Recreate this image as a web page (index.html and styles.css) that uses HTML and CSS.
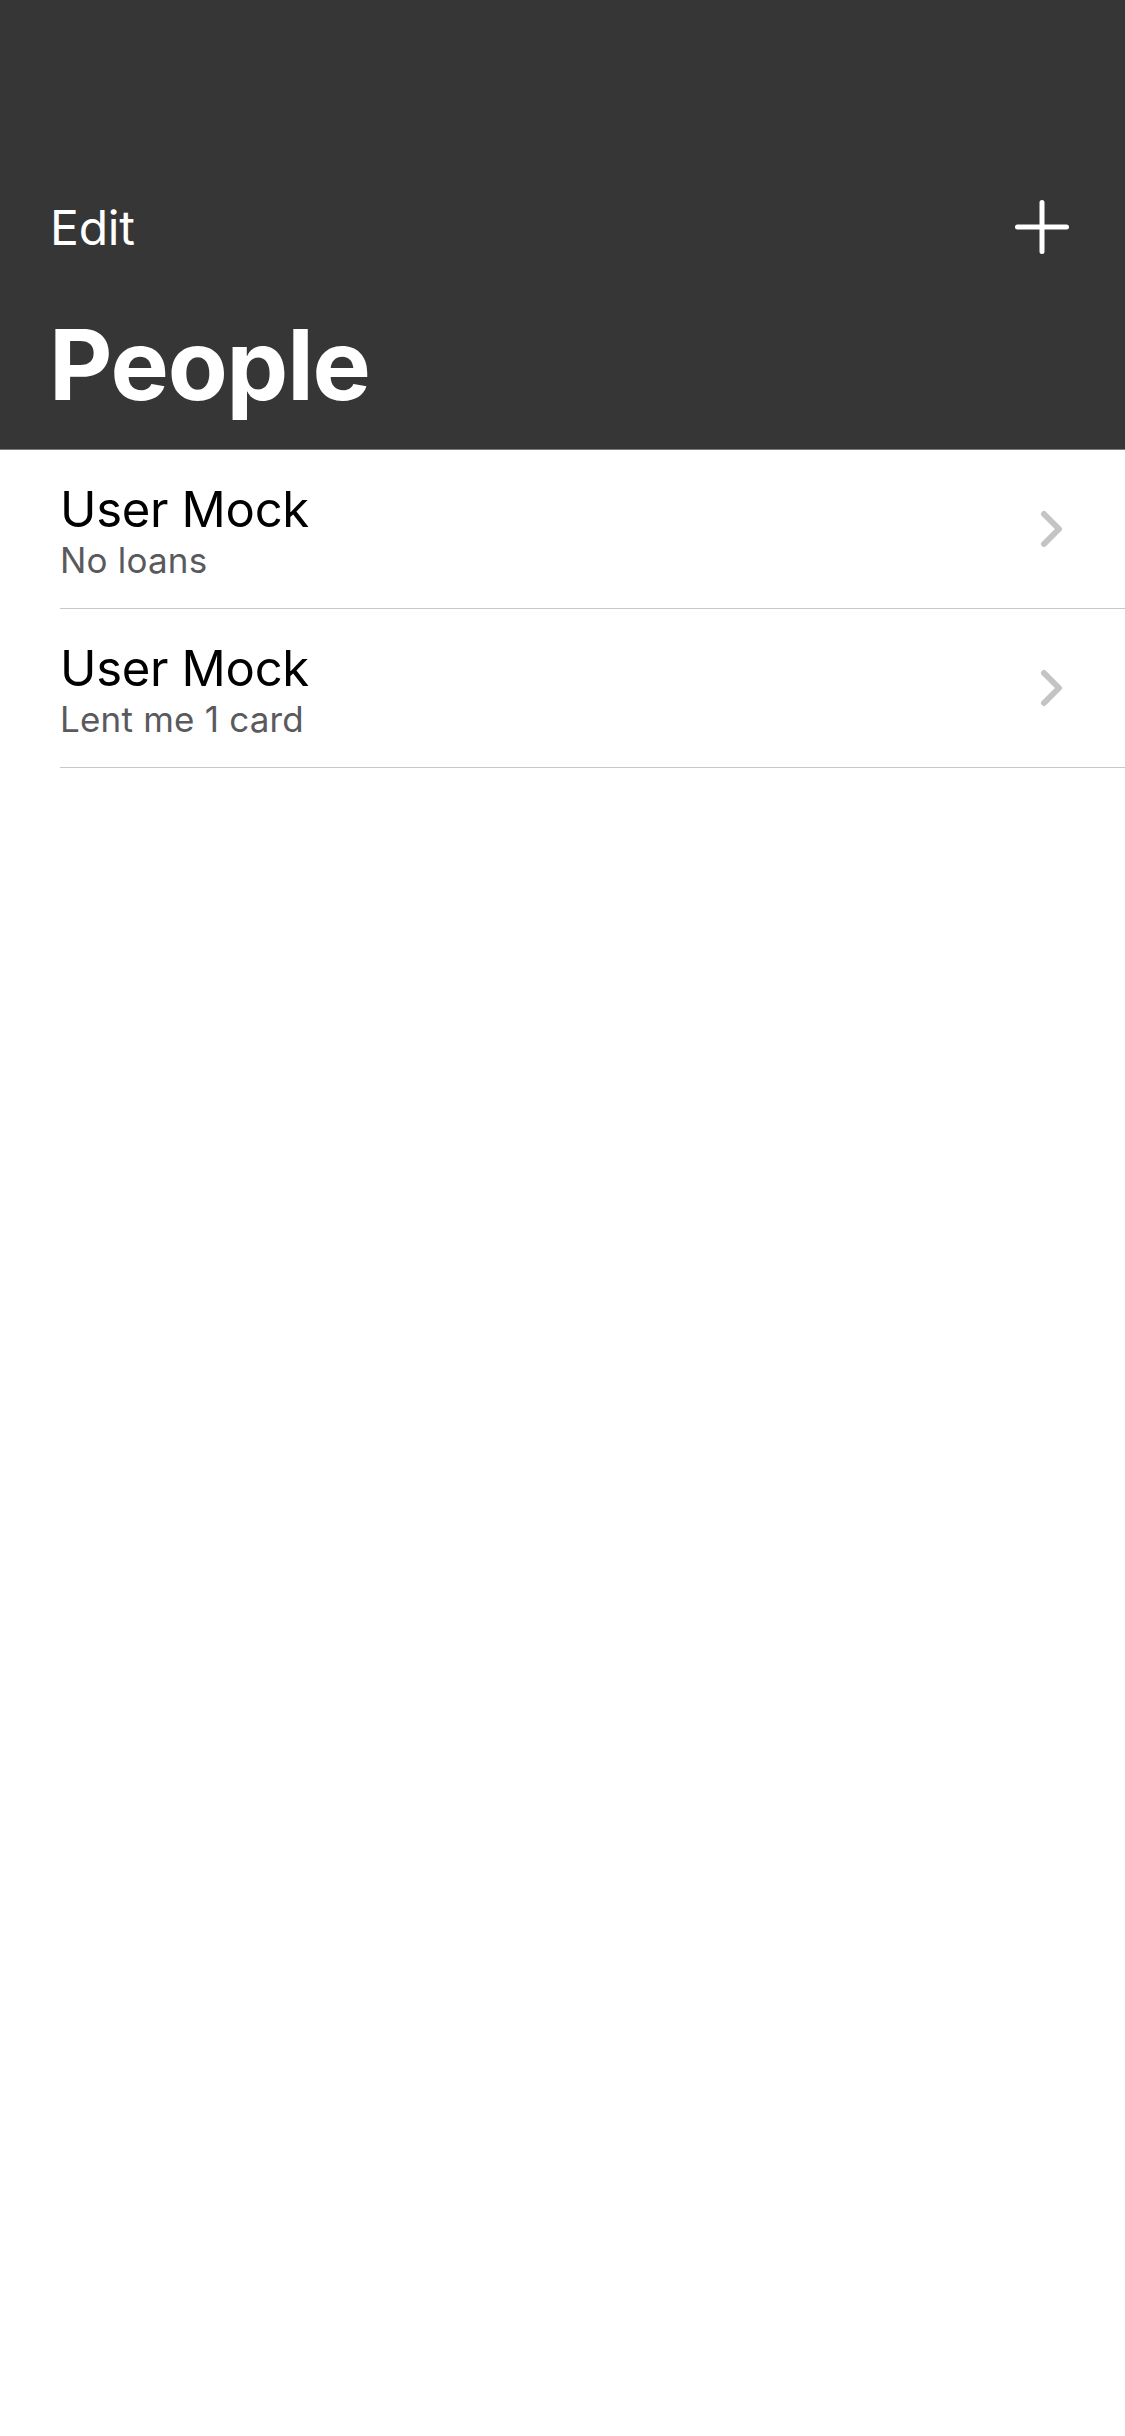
FILE: index.html
```html
<!DOCTYPE html>
<html lang="en">
<head>
<meta charset="utf-8">
<title>People</title>
<link rel="stylesheet" href="styles.css">
</head>
<body>
<header class="nav">
  <div class="nav-bar">
    <span class="nav-edit">Edit</span>
    <svg class="nav-add" width="56" height="56" viewBox="0 0 56 56" aria-label="Add">
      <path d="M28 3.5V52.5M3.5 28H52.5" stroke="#ffffff" stroke-width="5" stroke-linecap="round" fill="none"/>
    </svg>
  </div>
  <h1 class="nav-title">People</h1>
</header>
<main class="list">
  <div class="row">
    <div class="row-inner">
      <div class="row-text">
        <div class="row-title">User Mock</div>
        <div class="row-sub">No loans</div>
      </div>
      <svg class="chev" width="24" height="38" viewBox="0 0 24 38">
        <path d="M4 4L19 19L4 34" stroke="#c4c4c7" stroke-width="6" stroke-linecap="round" stroke-linejoin="round" fill="none"/>
      </svg>
    </div>
  </div>
  <div class="row">
    <div class="row-inner">
      <div class="row-text">
        <div class="row-title">User Mock</div>
        <div class="row-sub">Lent me 1 card</div>
      </div>
      <svg class="chev" width="24" height="38" viewBox="0 0 24 38">
        <path d="M4 4L19 19L4 34" stroke="#c4c4c7" stroke-width="6" stroke-linecap="round" stroke-linejoin="round" fill="none"/>
      </svg>
    </div>
  </div>
</main>
</body>
</html>
```

FILE: styles.css
```css
* { box-sizing: border-box; }
html, body {
  margin: 0;
  padding: 0;
  background: #ffffff;
  font-family: Inter, "Noto Sans", "Liberation Sans", sans-serif;
}
body { width: 1125px; min-height: 2436px; }

.nav {
  background: #363636;
  height: 450px;
  border-bottom: 1px solid #7c7c7c;
  display: flex;
  flex-direction: column;
  padding: 0 50px 0 50px;
}
.nav-bar {
  margin-top: 198px;
  height: 58px;
  display: flex;
  align-items: center;
  justify-content: space-between;
}
.nav-edit {
  color: #ffffff;
  font-size: 48px;
  font-weight: 400;
  letter-spacing: -0.2px;
}
.nav-add { margin-right: 5px; display: block; }
.nav-title {
  margin: 50px 0 0 -1px;
  color: #ffffff;
  font-size: 98px;
  font-weight: 700;
  line-height: 118px;
  letter-spacing: -1.2px;
}

.list { display: flex; flex-direction: column; }
.row { padding-left: 60px; }
.row-inner {
  height: 159px;
  border-bottom: 1px solid #c8c8cb;
  display: flex;
  align-items: center;
  justify-content: space-between;
  padding-right: 61px;
}
.row-text { display: flex; flex-direction: column; margin-top: 3px; }
.row-title {
  color: #000000;
  font-size: 49px;
  line-height: 58px;
  letter-spacing: -0.3px;
}
.row-sub {
  color: #5a5a5e;
  font-size: 35px;
  line-height: 42px;
  letter-spacing: 0.2px;
}
.chev { display: block; }
```
